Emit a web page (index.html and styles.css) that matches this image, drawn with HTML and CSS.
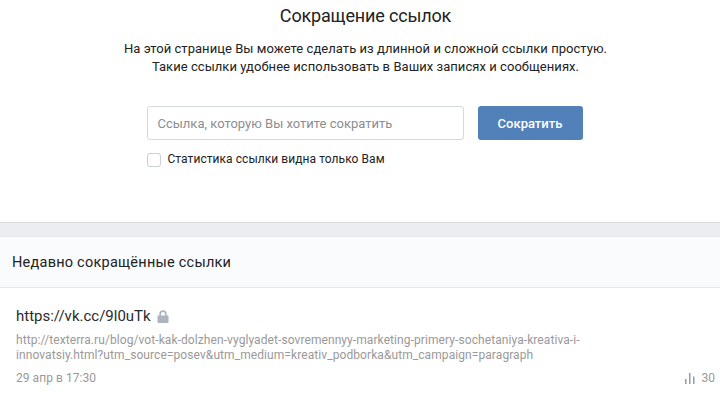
FILE: index.html
```html
<!DOCTYPE html>
<html lang="ru">
<head>
<meta charset="utf-8">
<title>Сокращение ссылок</title>
<link rel="stylesheet" href="styles.css">
</head>
<body>
<section class="top">
  <h1 class="title">Сокращение ссылок</h1>
  <p class="intro">На этой странице Вы можете сделать из длинной и сложной ссылки простую.<br>Такие ссылки удобнее использовать в Ваших записях и сообщениях.</p>
  <div class="form">
    <div class="form-row">
      <input class="field" type="text" placeholder="Ссылка, которую Вы хотите сократить">
      <button class="submit" type="button">Сократить</button>
    </div>
    <label class="check"><span class="box"></span><span>Статистика ссылки видна только Вам</span></label>
  </div>
</section>
<div class="band"></div>
<h2 class="recent">Недавно сокращённые ссылки</h2>
<section class="item">
  <div class="short"><span>https://vk.cc/9l0uTk</span>
    <svg class="lock" width="12" height="13" viewBox="0 0 12 13"><path fill="#adb4c0" d="M1.500 5.500H2.300V4a3.700 3.700 0 0 1 7.400 0v1.500h.8c.6 0 1 .4 1 1V12c0 .6-.4 1-1 1h-9c-.6 0-1-.4-1-1V6.500c0-.6.4-1 1-1zM4 5.500h4V4a2 2 0 0 0-4 0z"/></svg>
  </div>
  <div class="long">http://texterra.ru/blog/vot-kak-dolzhen-vyglyadet-sovremennyy-marketing-primery-sochetaniya-kreativa-i-<br>innovatsiy.html?utm_source=posev&amp;utm_medium=kreativ_podborka&amp;utm_campaign=paragraph</div>
  <div class="meta">
    <span>29 апр в 17:30</span>
    <span class="views">
      <svg class="bars" width="10" height="11" viewBox="0 0 10 11"><path fill="#939ca8" d="M0 6h1.500v5H0zM4 0h1.500v11H4zM8 3.500h1.500V11H8z"/></svg>
      30</span>
  </div>
</section>
</body>
</html>
```
FILE: styles.css
```css
* { box-sizing: border-box; }
html, body { margin: 0; padding: 0; }
body {
  width: 720px;
  height: 402px;
  overflow: hidden;
  background: #fff;
  font-family: Roboto, "Noto Sans", sans-serif;
  color: #222;
}
.top { height: 222px; padding-left: 11px; display: flex; flex-direction: column; align-items: center; }
.title { margin: 4px 0 0; font-size: 18px; font-weight: 400; line-height: 24px; letter-spacing: -.17px; }
.intro { margin: 12px 0 0; font-size: 13px; line-height: 18px; text-align: center; letter-spacing: .05px; }
.form { margin: 30px 2px 0 0; width: 436px; }
.form-row { display: flex; gap: 14px; }
.field {
  width: 317px; height: 34px; padding: 0 10px;
  border: 1px solid #d3d9de; border-radius: 3px;
  font: 13px Roboto, sans-serif; color: #222; background: #fff; outline: none;
}
.field::placeholder { color: #8b8e91; opacity: 1; }
.submit {
  width: 105px; height: 34px; border: 0; border-radius: 3px;
  background: #5181b8; color: #fff;
  font: 500 13px Roboto, sans-serif;
}
.check { margin-top: 12px; display: flex; align-items: center; gap: 7px; font-size: 12px; letter-spacing: .06px; line-height: 15px; }
.box { width: 14px; height: 14px; border: 1px solid #c5d0db; border-radius: 3px; background: #fff; }
.band { height: 15px; background: #ebedf0; border-top: 1px solid #d7d8db; border-bottom: 1px solid #e7e8ec; }
.recent {
  margin: 0; height: 51px; padding-left: 12px;
  background: #fafbfc; border-bottom: 1px solid #e7e8ec;
  font-size: 14.500px; font-weight: 400; line-height: 52px; letter-spacing: .24px;
}
.item { padding: 18px 5px 0 16px; }
.short { display: flex; align-items: center; gap: 6px; font-size: 15px; line-height: 20px; color: #2a2a2a; }
.long { margin-top: 7px; font-size: 12px; line-height: 15px; letter-spacing: .08px; color: #999; }
.meta { margin-top: 7px; display: flex; justify-content: space-between; font-size: 12px; line-height: 16px; letter-spacing: .05px; color: #999; }
.views { display: flex; align-items: center; gap: 6px; }
```
